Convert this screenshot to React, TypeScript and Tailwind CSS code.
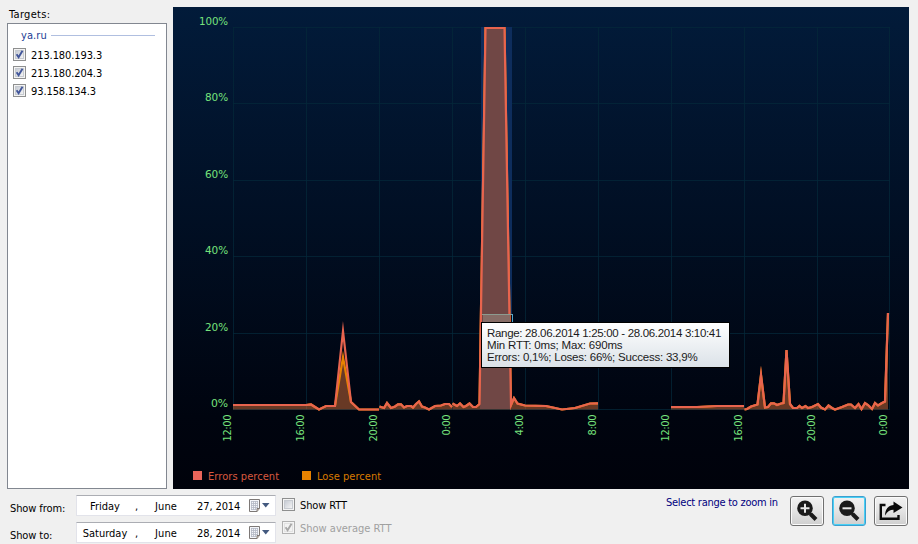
import { clsx } from 'clsx'

type Point = [number, number]

const TARGETS = ['213.180.193.3', '213.180.204.3', '93.158.134.3']

const GRID_X = [233.5, 306.5, 379.5, 452.5, 525.5, 598.5, 671.5, 744.5, 817.5, 889.5]
const GRID_Y = [27.5, 103.5, 180.5, 256.5, 333.5, 409.5]
const HOURS = ['12:00', '16:00', '20:00', '0:00', '4:00', '8:00', '12:00', '16:00', '20:00', '0:00']
const PERCENTS = ['100%', '80%', '60%', '40%', '20%', '0%']
const BASELINE = 409.5

// each run is drawn on its own, the collector was off between them
const buildRuns = (peak: number): Point[][] => [
  [[233, 405], [306, 405], [311, 404.5], [319, 409.5], [326, 406], [335, 406], [343, peak], [351, 402], [359, 409.5], [379, 409.5]],
  [[379.5, 406.5], [384, 408], [387, 403], [391, 408], [395, 406.5], [398, 404.3], [401, 404.3], [404, 407.5], [407, 406], [411, 406], [413, 407.5], [416, 404], [419, 401.5], [422, 406.5], [425, 407.5], [429, 409.5], [435, 406], [441, 405.5], [445, 404], [449, 404], [452, 407]],
  [[452.5, 403.5], [457, 406], [460, 403.5], [463.5, 407], [466, 406], [469.5, 403.5], [473, 407], [476, 407], [479.5, 404], [485.5, 28], [504.5, 28], [511, 405], [514, 398], [517.5, 403.5], [525, 405.5], [546, 406], [562, 409.5], [575, 408], [590, 403.5], [598, 403.3]],
  [[671, 407], [697, 407], [717, 406], [744, 406]],
  [[744.5, 409.5], [747, 409], [751, 406.5], [757.5, 404.5], [761, 375], [765, 407.5], [768, 407], [771, 403.3], [774, 403.3], [777, 405], [781, 403.5], [783.5, 403], [786.5, 350], [790, 404], [793, 408], [797, 408], [799.5, 406], [802, 408], [805.5, 406], [808, 408], [812, 407], [818, 404], [821, 407.5], [825, 409.5], [828.5, 405.5], [832, 408], [835, 409.5], [842, 407], [848, 404.5], [851, 404.5], [855, 408], [858.5, 404], [861.5, 409], [865, 403], [868, 405], [872, 409], [875, 403], [878, 405.5], [882, 403], [885, 401.5], [888, 313]],
]

const errorRuns = buildRuns(331)
const loseRuns = buildRuns(357)

const toLine = (points: Point[]) => points.map((p) => p.join(',')).join(' ')
const toArea = (points: Point[]) =>
  `${points[0][0]},${BASELINE} ${toLine(points)} ${points[points.length - 1][0]},${BASELINE}`

function Chart() {
  return (
    <svg width="736" height="482" viewBox="173 7 736 482" className="block">
      <defs>
        <linearGradient id="sky" x1="0" y1="0" x2="0" y2="1">
          <stop offset="0" stopColor="#021b3a" />
          <stop offset="0.85" stopColor="#00040f" />
          <stop offset="1" stopColor="#00020b" />
        </linearGradient>
      </defs>
      <rect x="173" y="7" width="736" height="482" fill="url(#sky)" />
      <g stroke="#04283a" shapeRendering="crispEdges" strokeOpacity="0.75">
        {GRID_X.map((x) => (
          <line key={x} x1={x} x2={x} y1="27" y2="410" />
        ))}
        {GRID_Y.map((y) => (
          <line key={y} x1="233" x2="890" y1={y} y2={y} />
        ))}
      </g>
      <rect x="481" y="27" width="31" height="287" fill="#0e2d5c" />
      {loseRuns.map((run, i) => (
        <g key={i}>
          <polygon points={toArea(run)} fill="#f08040" fillOpacity="0.43" />
          <polyline points={toLine(run)} fill="none" stroke="#e88200" strokeWidth="2.2" strokeMiterlimit="12" />
        </g>
      ))}
      <polygon points="485,28 505,28 511,409 480,409" fill="#704745" />
      {errorRuns.map((run, i) => (
        <polyline key={i} points={toLine(run)} fill="none" stroke="#e8644e" strokeWidth="2.2" strokeMiterlimit="12" />
      ))}
      <rect x="483" y="315" width="27" height="12" fill="#866c66" />
      <path d="M482 314.5H512.5V324" fill="none" stroke="#8c9b90" />
      <path d="M512.5 314V324" stroke="#4fa6cc" />
      <g fill="#76e27c" fontSize="11" fontFamily="'DejaVu Sans Condensed', 'DejaVu Sans', sans-serif">
        {PERCENTS.map((label, i) => (
          <text
            key={label}
            x="228"
            y={GRID_Y[i] - 2.5}
            textAnchor="end"
            textLength={[29, 23, 23, 23, 23, 17][i]}
            lengthAdjust="spacingAndGlyphs"
          >
            {label}
          </text>
        ))}
        {HOURS.map((label, i) => (
          <text
            key={i}
            transform={`translate(${GRID_X[i] - 2.5} 414.5) rotate(-90)`}
            textAnchor="end"
            textLength={label.length === 5 ? 27 : 21}
          >
            {label}
          </text>
        ))}
      </g>
      <g fontSize="11" fontFamily="'DejaVu Sans Condensed', 'DejaVu Sans', sans-serif">
        <rect x="193" y="471" width="9" height="9" fill="#e8645a" />
        <text x="208" y="480" fill="#d9593f" textLength="71">Errors percent</text>
        <rect x="302" y="471" width="9" height="9" fill="#e88200" />
        <text x="317" y="480" fill="#d87a00" textLength="64">Lose percent</text>
      </g>
    </svg>
  )
}

function CheckBox({ checked, disabled }: { checked?: boolean; disabled?: boolean }) {
  return (
    <svg width="13" height="13" viewBox="0 0 13 13" className="shrink-0">
      <defs>
        <linearGradient id="well" x1="0" y1="0" x2="1" y2="1">
          <stop offset="0" stopColor="#c4c9d2" />
          <stop offset="1" stopColor="#f6f6f6" />
        </linearGradient>
      </defs>
      <rect x="0.5" y="0.5" width="12" height="12" fill="#f4f4f4" stroke={disabled ? '#b1b1b1' : '#8e8f8f'} />
      <rect x="2.5" y="2.5" width="8" height="8" fill={disabled ? '#f3f3f3' : 'url(#well)'} stroke={disabled ? '#e2e2e2' : '#c6cad0'} />
      {checked && (
        <path d="M3.6 6.2 5.6 9.2 9.5 2.8" fill="none" stroke={disabled ? '#a8a8a8' : '#42569a'} strokeWidth="1.9" />
      )}
    </svg>
  )
}

function DatePicker({ day, date }: { day: string; date: string }) {
  return (
    <div className="flex h-[21px] w-[200px] items-center border border-[#e2e3ea] border-t-[#abadb3] bg-white">
      <span className="ml-[3px] w-[50px] pt-px text-center tracking-normal">{day}</span>
      <span className="ml-[5px] w-4 pt-px">,</span>
      <span className="ml-1 w-[42px] pt-px tracking-[0.1px] whitespace-nowrap">June</span>
      <span className="w-[52px] pt-px whitespace-nowrap">{date}</span>
      <svg width="22" height="13" viewBox="0 0 22 13" className="shrink-0">
        <path d="M0.5 0.5H10.5V9.5L8 12.5H0.5Z" fill="#f4f6fa" stroke="#7d7876" />
        <path d="M2 2.5H9M2 4.5H9M2 6.5H9M2 8.5H9M2 10.5H7M2.5 2V11M4.5 2V11M6.5 2V11M8.5 2V9" stroke="#b3b8c4" strokeWidth="0.8" />
        <path d="M10.5 9.5H8V12.5" fill="#c9b9ad" stroke="#7d7876" />
        <path d="M13 4H20.5L16.750 8.500Z" fill="#43597f" />
      </svg>
    </div>
  )
}

function ToolButton({ active, children }: { active?: boolean; children: React.ReactNode }) {
  return (
    <button
      className={clsx(
        'flex h-[30px] w-[34px] items-center justify-center rounded-[3px] border bg-linear-to-b from-[#f2f2f2] from-0% via-[#e4e4e4] via-50% to-[#cfcfcf] to-100%',
        active ? 'border-[#3c9fcf] shadow-[inset_0_0_0_1px_#48d0f5]' : 'border-[#707070] shadow-[inset_0_0_0_1px_#fbfbfb]',
      )}
    >
      {children}
    </button>
  )
}

function Magnifier({ plus }: { plus?: boolean }) {
  return (
    <svg width="22" height="22" viewBox="0 0 22 22">
      <path d="M13 12.500 16 15.500" stroke="#1b1b1b" strokeWidth="2.6" />
      <path d="M14.500 14 20 19.500" stroke="#1b1b1b" strokeWidth="4" />
      <circle cx="9" cy="8.3" r="7.8" fill="#1b1b1b" />
      <path d={plus ? 'M4.500 8.300H13.500M9 3.800V12.800' : 'M4.500 8.300H13.500'} stroke="#e8e8e8" strokeWidth="2" />
    </svg>
  )
}

export default function App() {
  return (
    <div className="h-[544px] w-[918px] overflow-hidden bg-[#f0f0f0] font-['DejaVu_Sans_Condensed','DejaVu_Sans',sans-serif] text-[11px] leading-[13px] tracking-[-0.1px] text-black">
      <div className="flex h-[489px] pt-[7px] pl-[7px]">
        <aside className="flex w-40 flex-col">
          <div className="h-4 pt-px pl-0.5 tracking-[0.3px]">Targets:</div>
          <div className="flex-1 border border-[#828790] bg-white">
            <div className="mt-[5px] flex h-[13px] items-center pr-[11px] pl-[13px] text-[#1b3d94]">
              <span className="w-[30px] tracking-[0.1px]">ya.ru</span>
              <span className="mb-px h-px flex-1 bg-[#b0bfe0]" />
            </div>
            <div className="mt-[3px]">
              {TARGETS.map((ip) => (
                <label key={ip} className="flex h-[18px] items-center gap-[5px] pl-[5px]">
                  <CheckBox checked />
                  <span className="pt-0.5">{ip}</span>
                </label>
              ))}
            </div>
          </div>
        </aside>

        <main className="relative ml-1.5">
          <Chart />
          <div className="absolute top-[315px] left-[308px] h-[46px] w-[249px] border border-black bg-linear-to-b from-white to-[#dbe2e8] pt-1 pl-[5px] font-['Liberation_Sans',sans-serif] text-[11.5px] leading-3 whitespace-nowrap text-[#1a1a1a]">
            <div className="tracking-[-0.32px]">Range: 28.06.2014 1:25:00 - 28.06.2014 3:10:41</div>
            <div className="tracking-[-0.18px]">Min RTT: 0ms; Max: 690ms</div>
            <div className="tracking-[-0.22px]">Errors: 0,1%; Loses: 66%; Success: 33,9%</div>
          </div>
        </main>
      </div>

      <footer className="flex h-[55px] pt-1.5">
        <div className="flex flex-col gap-1.5 pl-2.5">
          <div className="flex h-[21px]">
            <span className="w-[66px] pt-[7px]">Show from:</span>
            <DatePicker day="Friday" date="27, 2014" />
          </div>
          <div className="flex h-[21px]">
            <span className="w-[66px] pt-[7px]">Show to:</span>
            <DatePicker day="Saturday" date="28, 2014" />
          </div>
        </div>
        <div className="ml-1.5 flex w-[384px] flex-col gap-2.5 pt-[3px]">
          <label className="flex h-[13px] items-center gap-[5px]">
            <CheckBox />
            <span className="pt-0.5">Show RTT</span>
          </label>
          <label className="flex h-[13px] items-center gap-[5px] tracking-normal text-[#a0a0a0]">
            <CheckBox checked disabled />
            <span className="pt-0.5">Show average RTT</span>
          </label>
        </div>
        <span className="w-[124px] pt-px tracking-[-0.26px] whitespace-nowrap text-[#00007f]">Select range to zoom in</span>
        <div className="flex gap-2 pt-px">
          <ToolButton>
            <Magnifier plus />
          </ToolButton>
          <ToolButton active>
            <Magnifier />
          </ToolButton>
          <ToolButton>
            <svg width="24" height="20" viewBox="0 0 24 20">
              <path d="M6.500 4H1.800V17.800H19.500V14" fill="none" stroke="#0a0a0a" strokeWidth="2.4" />
              <path d="M14.500 0.500 23.500 6.500 14.500 12V8.800C11 8.800 8.500 10.500 6 14.500 6.200 8.500 9 4.300 14.500 4Z" fill="#0a0a0a" />
            </svg>
          </ToolButton>
        </div>
      </footer>
    </div>
  )
}
